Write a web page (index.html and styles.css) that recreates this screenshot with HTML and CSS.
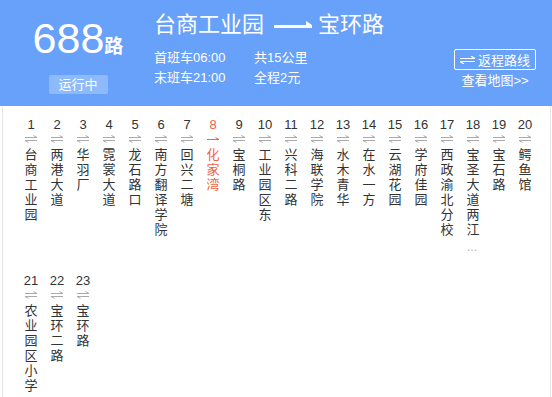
FILE: index.html
```html
<!DOCTYPE html>
<html lang="zh-CN">
<head>
  <meta charset="UTF-8">
  <meta name="viewport" content="width=device-width, initial-scale=1.0">
  <title>688路 公交线路</title>
  <link rel="stylesheet" href="styles.css">
</head>
<body>

  <!-- 线路头部 -->
  <div class="header">
    <div class="line-no">
      <div class="num">688<span class="unit">路</span></div>
      <div class="status">运行中</div>
    </div>

    <div class="line-info">
      <div class="title">
        台商工业园
        <svg class="dir" width="38" height="8" viewBox="0 0 38 8">
          <rect x="0" y="4" width="38" height="3" fill="#fff"/>
          <polygon points="32,0 38,4 32,4" fill="#fff"/>
        </svg>
        宝环路
      </div>
      <div class="times">
        <div class="row"><span class="col">首班车06:00</span><span>共15公里</span></div>
        <div class="row"><span class="col">末班车21:00</span><span>全程2元</span></div>
      </div>
    </div>

    <div class="actions">
      <a class="back" href="#">
        <svg width="15" height="8" viewBox="0 0 15 8">
          <path d="M0 2.5H15M15 2.5L11 0M0 5.5H15M0 5.5L4 8" stroke="#fff" stroke-width="1.2" fill="none"/>
        </svg>
        返程路线
      </a>
      <a class="map" href="#">查看地图&gt;&gt;</a>
    </div>
  </div>

  <!-- 站点列表 -->
  <div class="stops">
    <div class="stop"><div class="idx">1</div><i class="way"></i><div class="name">台商工业园</div></div>
    <div class="stop"><div class="idx">2</div><i class="way"></i><div class="name">两港大道</div></div>
    <div class="stop"><div class="idx">3</div><i class="way"></i><div class="name">华羽厂</div></div>
    <div class="stop"><div class="idx">4</div><i class="way"></i><div class="name">霓裳大道</div></div>
    <div class="stop"><div class="idx">5</div><i class="way"></i><div class="name">龙石路口</div></div>
    <div class="stop"><div class="idx">6</div><i class="way"></i><div class="name">南方翻译学院</div></div>
    <div class="stop"><div class="idx">7</div><i class="way"></i><div class="name">回兴二塘</div></div>
    <div class="stop current"><div class="idx">8</div><i class="way one"></i><div class="name">化家湾</div></div>
    <div class="stop"><div class="idx">9</div><i class="way"></i><div class="name">宝桐路</div></div>
    <div class="stop"><div class="idx">10</div><i class="way"></i><div class="name">工业园区东</div></div>
    <div class="stop"><div class="idx">11</div><i class="way"></i><div class="name">兴科二路</div></div>
    <div class="stop"><div class="idx">12</div><i class="way"></i><div class="name">海联学院</div></div>
    <div class="stop"><div class="idx">13</div><i class="way"></i><div class="name">水木青华</div></div>
    <div class="stop"><div class="idx">14</div><i class="way"></i><div class="name">在水一方</div></div>
    <div class="stop"><div class="idx">15</div><i class="way"></i><div class="name">云湖花园</div></div>
    <div class="stop"><div class="idx">16</div><i class="way"></i><div class="name">学府佳园</div></div>
    <div class="stop"><div class="idx">17</div><i class="way"></i><div class="name">西政渝北分校</div></div>
    <div class="stop"><div class="idx">18</div><i class="way"></i><div class="name">宝圣大道两江<span class="more">...</span></div></div>
    <div class="stop"><div class="idx">19</div><i class="way"></i><div class="name">宝石路</div></div>
    <div class="stop"><div class="idx">20</div><i class="way"></i><div class="name">鳄鱼馆</div></div>
    <div class="stop"><div class="idx">21</div><i class="way"></i><div class="name">农业园区小学</div></div>
    <div class="stop"><div class="idx">22</div><i class="way"></i><div class="name">宝环二路</div></div>
    <div class="stop"><div class="idx">23</div><i class="way"></i><div class="name">宝环路</div></div>
  </div>

</body>
</html>
```

FILE: styles.css
```css
body {
  margin: 0;
  font-family: 'Liberation Sans', 'Noto Sans CJK SC', sans-serif;
  background-color: #fff;
  color: #333;
}

a {
  color: #fff;
  text-decoration: none;
}

/* 头部 */
.header {
  display: flex;
  height: 106px;
  background-color: #68a1fa;
  color: #fff;
}

.line-no {
  width: 130px;
  margin-left: 13px;
  padding-top: 14px;
  text-align: center;
}

.line-no .num {
  font-size: 43px;
  line-height: 48px;
}

.line-no .unit {
  font-size: 19px;
  font-weight: bold;
}

.status {
  display: inline-block;
  width: 59px;
  height: 19px;
  margin-top: 4px;
  line-height: 19px;
  font-size: 13px;
  background-color: #8ebafc;
  border-radius: 2px;
}

.line-info {
  flex: 1;
  margin-left: 11px;
  padding-top: 10px;
}

.title {
  display: flex;
  align-items: center;
  font-size: 22px;
  line-height: 30px;
}

.title .dir {
  margin: 0 6px 0 10px;
}

.times {
  margin-top: 8px;
  font-size: 13px;
  line-height: 20px;
}

.times .col {
  display: inline-block;
  width: 100px;
}

.actions {
  width: 82px;
  margin-right: 16px;
  padding-top: 49px;
  text-align: center;
  font-size: 13px;
}

.back {
  display: flex;
  align-items: center;
  justify-content: center;
  gap: 3px;
  height: 19px;
  border: 1px solid #fff;
  border-radius: 2px;
}

.map {
  display: block;
  margin-top: 2px;
  line-height: 18px;
}

/* 站点 */
.stops {
  display: flex;
  flex-wrap: wrap;
  align-items: flex-start;
  row-gap: 13px;
  width: 532px;
  min-height: 280px;
  margin-left: 2px;
  padding: 11px 0 0 15px;
  border-left: 1px solid #e6e6e6;
  border-right: 1px solid #e6e6e6;
}

.stop {
  width: 26px;
  text-align: center;
}

.idx {
  font-size: 13px;
  line-height: 16px;
}

.way {
  display: block;
  width: 12px;
  height: 8px;
  margin: 2px auto 4px;
  background: url("data:image/svg+xml;utf8,<svg xmlns='http://www.w3.org/2000/svg' width='12' height='8'><path d='M0 2.5H12M12 2.5L8.5 0.5M0 5.5H12M0 5.5L3.5 7.5' stroke='%23aaa' fill='none'/></svg>") no-repeat;
}

.way.one {
  background: url("data:image/svg+xml;utf8,<svg xmlns='http://www.w3.org/2000/svg' width='12' height='8'><path d='M0 4.5H12M12 4.5L8.5 2.5' stroke='%23f5603e' fill='none'/></svg>") no-repeat;
}

.name {
  width: 14px;
  margin: 0 auto;
  font-size: 13px;
  line-height: 15px;
}

.more {
  display: block;
  margin-left: -2px;
  padding-top: 3px;
  font-size: 12px;
  color: #a8b4c4;
  white-space: nowrap;
}

.current .idx,
.current .name {
  color: #f5603e;
}
```
